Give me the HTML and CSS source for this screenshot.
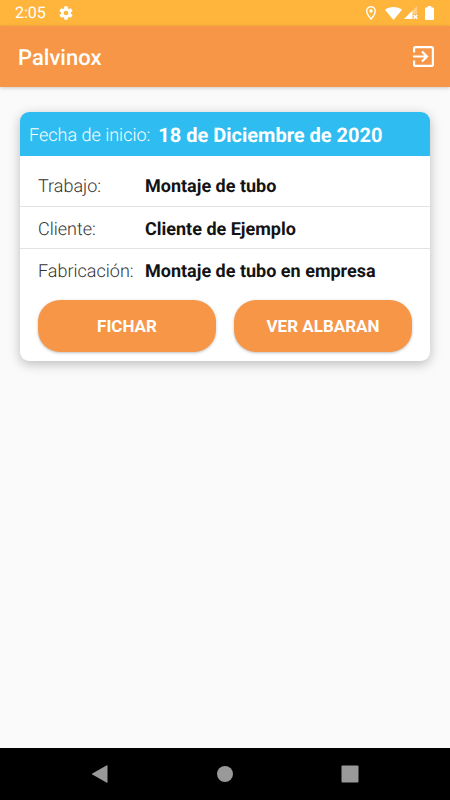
FILE: index.html
```html
<!DOCTYPE html>
<html lang="es">
<head>
<meta charset="utf-8">
<meta name="viewport" content="width=device-width, initial-scale=1">
<title>Palvinox</title>
<link rel="stylesheet" href="styles.css">
</head>
<body>
<div class="status">
  <span class="time">2:05</span>
  <svg class="gear" width="16" height="16" viewBox="0 0 24 24" fill="currentColor" aria-hidden="true"><path d="M19.43 12.98c.04-.32.07-.64.07-.98s-.03-.66-.07-.98l2.11-1.65c.19-.15.24-.42.12-.64l-2-3.46c-.12-.22-.39-.3-.61-.22l-2.49 1c-.52-.4-1.08-.73-1.69-.98l-.38-2.65A.49.49 0 0 0 14 2h-4c-.25 0-.46.18-.49.42l-.38 2.65c-.61.25-1.17.59-1.69.98l-2.49-1c-.23-.09-.49 0-.61.22l-2 3.46c-.13.22-.07.49.12.64l2.11 1.65c-.04.32-.07.65-.07.98s.03.66.07.98l-2.11 1.65c-.19.15-.24.42-.12.64l2 3.46c.12.22.39.3.61.22l2.49-1c.52.4 1.08.73 1.69.98l.38 2.65c.03.24.24.42.49.42h4c.25 0 .46-.18.49-.42l.38-2.65c.61-.25 1.17-.59 1.69-.98l2.49 1c.23.09.49 0 .61-.22l2-3.46c.12-.22.07-.49-.12-.64zM12 15.5a3.5 3.5 0 1 1 0-7 3.5 3.5 0 0 1 0 7z"/></svg>
  <div class="indicators">
    <svg width="10" height="14" viewBox="0 0 10 14" aria-hidden="true"><path d="M5 .7C2.600.7.7 2.500.7 4.900.7 7.900 5 13 5 13s4.300-5.100 4.300-8.100C9.300 2.500 7.400.7 5 .7z" fill="none" stroke="currentColor" stroke-width="1.400"/><circle cx="5" cy="5" r="1.700" fill="currentColor"/></svg>
    <svg class="wifi" width="17" height="13" viewBox="0 0 17 13" fill="currentColor" aria-hidden="true"><path d="M0 2.800C2.300 1 5.200 0 8.500 0S14.700 1 17 2.800L8.500 13z"/></svg>
    <svg class="signal" width="14" height="14" viewBox="0 0 14 14" fill="currentColor" aria-hidden="true"><path d="M13 0v8H8.500V4.500z" opacity=".35"/><path d="M8.500 4.500V13H0z"/><path d="M9.500 9l3.800 3.800M13.300 9l-3.800 3.800" stroke="currentColor" stroke-width="1.500"/></svg>
    <svg class="battery" width="9" height="14" viewBox="0 0 9 14" fill="currentColor" aria-hidden="true"><path d="M2.700 0h3.600v1.500H8q1 0 1 1V13q0 1-1 1H1q-1 0-1-1V2.500q0-1 1-1h1.700z"/></svg>
  </div>
</div>
<header class="appbar">
  <h1>Palvinox</h1>
  <button class="exit" type="button" aria-label="Salir">
    <svg width="21" height="21" viewBox="0 0 21 21" fill="none" stroke="currentColor" stroke-width="2.200" aria-hidden="true"><path d="M1.100 6.500V2.600Q1.100 1.100 2.600 1.100h15.800q1.500 0 1.500 1.500v15.800q0 1.500-1.500 1.500H2.600q-1.500 0-1.500-1.500v-3.900M0 10.500h13.500M9 5.500l5 5-5 5"/></svg>
  </button>
</header>
<main>
  <article class="card">
    <h2 class="card-head"><span>Fecha de inicio:</span><strong>18 de Diciembre de 2020</strong></h2>
    <dl class="details">
      <div class="row"><dt>Trabajo:</dt><dd>Montaje de tubo</dd></div>
      <div class="row"><dt>Cliente:</dt><dd>Cliente de Ejemplo</dd></div>
      <div class="row"><dt>Fabricación:</dt><dd>Montaje de tubo en empresa</dd></div>
    </dl>
    <div class="actions">
      <button type="button">FICHAR</button>
      <button type="button">VER ALBARAN</button>
    </div>
  </article>
</main>
<nav class="sysnav">
  <button type="button" aria-label="Atrás"><svg width="18" height="18" viewBox="0 0 18 18" fill="currentColor"><path d="M16.500.6v16.800q0 .6-.6.3L1.300 9.500q-.8-.5 0-1L15.900.3q.6-.3.6.3z"/></svg></button>
  <button type="button" aria-label="Inicio"><svg width="18" height="18" viewBox="0 0 18 18" fill="currentColor"><circle cx="9" cy="9" r="8"/></svg></button>
  <button type="button" aria-label="Recientes"><svg width="18" height="18" viewBox="0 0 18 18" fill="currentColor"><rect x=".5" y=".5" width="17" height="17" rx="1"/></svg></button>
</nav>
</body>
</html>
```
FILE: styles.css
```css
* {
  box-sizing: border-box;
}

body {
  margin: 0;
  min-height: 100vh;
  display: flex;
  flex-direction: column;
  background: #fafafa;
  color: #131313;
  font-family: Roboto, "Liberation Sans", sans-serif;
  text-rendering: geometricPrecision;
}

h1, h2, dl, dd {
  margin: 0;
}

svg {
  display: block;
}

button {
  border: 0;
  padding: 0;
  background: none;
  color: inherit;
  font: inherit;
}

.status {
  display: flex;
  align-items: center;
  gap: 12px;
  height: 26px;
  padding: 0 16px 0 15px;
  background: #ffb43c;
  color: #fff;
}

.time {
  font-size: 16px;
  line-height: 28px;
}

.indicators {
  display: flex;
  align-items: center;
  margin-left: auto;
}

.wifi {
  margin-left: 9px;
}

.signal {
  margin-left: 2px;
}

.battery {
  margin-left: 7px;
}

.appbar {
  display: flex;
  align-items: center;
  justify-content: space-between;
  height: 61px;
  padding: 0 16px 0 18px;
  background: #f79646;
  color: #fff;
  box-shadow: 0 1px 4px rgba(0, 0, 0, .2);
}

.appbar h1 {
  padding-top: 4px;
  font-size: 22px;
  font-weight: 500;
  line-height: 28px;
}

main {
  flex: 1;
  padding: 25px 20px;
}

.card {
  border-radius: 9px;
  overflow: hidden;
  background: #fff;
  box-shadow: 0 3px 12px rgba(0, 0, 0, .25);
}

.card-head {
  display: flex;
  align-items: center;
  gap: 8px;
  height: 44px;
  padding: 2px 9px 0;
  background: #2fbdf1;
  color: #fff;
  font-size: 18px;
  font-weight: 300;
}

.card-head strong {
  font-size: 20px;
  font-weight: 700;
}

.details {
  padding: 8px 0 1px;
}

.row {
  display: grid;
  grid-template-columns: 107px 1fr;
  align-items: center;
  height: 42px;
  padding: 3px 18px 0;
  font-size: 18px;
}

.row + .row {
  border-top: 1px solid #e2e2e2;
}

.row dt {
  color: #333;
  font-weight: 300;
}

.row dd {
  font-weight: 700;
}

.actions {
  display: grid;
  grid-template-columns: 1fr 1fr;
  gap: 18px;
  padding: 9px 18px;
}

.actions button {
  height: 52px;
  border-radius: 22px;
  background: #f79646;
  color: #fff;
  font-size: 17px;
  font-weight: 700;
  box-shadow: 0 1px 3px rgba(0, 0, 0, .25);
}

.sysnav {
  display: grid;
  grid-template-columns: repeat(3, 1fr);
  align-items: center;
  height: 52px;
  padding: 0 37px;
  background: #000;
  color: #999;
}

.sysnav button {
  display: flex;
  justify-content: center;
}
```
